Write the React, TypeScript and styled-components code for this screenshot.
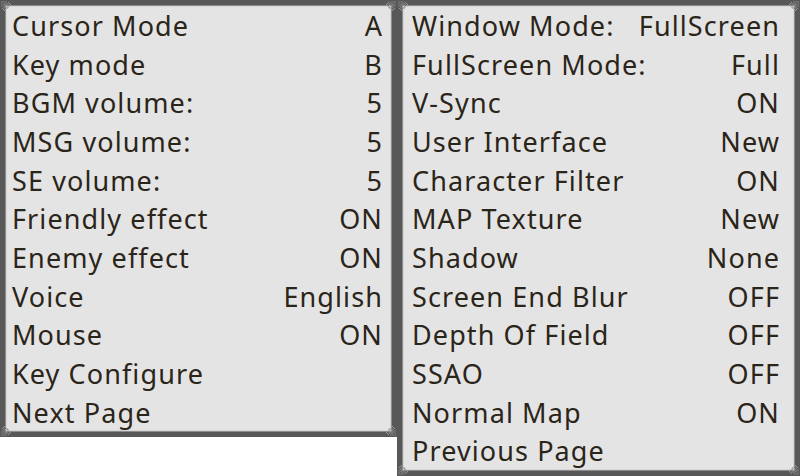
import React from 'react';
import styled, {createGlobalStyle} from 'styled-components';

type Item = {label: string; value?: string};

const leftItems: Item[] = [
  {label: 'Cursor Mode', value: 'A'},
  {label: 'Key mode', value: 'B'},
  {label: 'BGM volume:', value: '5'},
  {label: 'MSG volume:', value: '5'},
  {label: 'SE volume:', value: '5'},
  {label: 'Friendly effect', value: 'ON'},
  {label: 'Enemy effect', value: 'ON'},
  {label: 'Voice', value: 'English'},
  {label: 'Mouse', value: 'ON'},
  {label: 'Key Configure'},
  {label: 'Next Page'},
];

const rightItems: Item[] = [
  {label: 'Window Mode:', value: 'FullScreen'},
  {label: 'FullScreen Mode:', value: 'Full'},
  {label: 'V-Sync', value: 'ON'},
  {label: 'User Interface', value: 'New'},
  {label: 'Character Filter', value: 'ON'},
  {label: 'MAP Texture', value: 'New'},
  {label: 'Shadow', value: 'None'},
  {label: 'Screen End Blur', value: 'OFF'},
  {label: 'Depth Of Field', value: 'OFF'},
  {label: 'SSAO', value: 'OFF'},
  {label: 'Normal Map', value: 'ON'},
  {label: 'Previous Page'},
];

type Pos = 'tl' | 'tr' | 'bl' | 'br';

const Corner = ({pos}: {pos: Pos}) => (
  <Ornament pos={pos} width="14" height="14" viewBox="0 0 14 14">
    <path d="M1 1h6v2H3v4H1z" fill="#6a6a6a" />
    <path d="M4 4h4v4H4z" fill="none" stroke="#8a8a8a" strokeWidth="1" />
    <path d="M8 2l3 3M2 8l3 3" stroke="#9a9a9a" strokeWidth="1" />
  </Ornament>
);

type PanelProps = {items: Item[]; width: number; height: number; padLeft: number; padRight: number};

const Panel = ({items, ...frame}: PanelProps) => (
  <Frame {...frame}>
    <Corner pos="tl" />
    <Corner pos="tr" />
    <Corner pos="bl" />
    <Corner pos="br" />
    <List>
      {items.map(item => (
        <Row key={item.label}>
          <span>{item.label}</span>
          {item.value && <span>{item.value}</span>}
        </Row>
      ))}
    </List>
  </Frame>
);

export default function App() {
  return (
    <>
      <GlobalStyle />
      <Screen>
        <Panel items={leftItems} width={397} height={437} padLeft={7} padRight={9} />
        <Panel items={rightItems} width={403} height={476} padLeft={10} padRight={15} />
      </Screen>
    </>
  );
}

const GlobalStyle = createGlobalStyle`
  body {
    margin: 0;
    background: #ffffff;
    font-family: "Noto Sans", "DejaVu Sans", sans-serif;
  }
`;

const Screen = styled.div`
  display: flex;
  align-items: flex-start;
  width: 800px;
  height: 476px;
  overflow: hidden;
`;

const Frame = styled.div<{width: number; height: number; padLeft: number; padRight: number}>`
  position: relative;
  box-sizing: border-box;
  width: ${p => p.width}px;
  height: ${p => p.height}px;
  background: #e4e4e4;
  border: 5px solid #585858;
  box-shadow: inset 0 0 0 1px #8c8c8c, inset 0 0 0 2px #d6d6d6;
  padding: 1px ${p => p.padRight}px 0 ${p => p.padLeft}px;
`;

const Ornament = styled.svg<{pos: Pos}>`
  position: absolute;
  ${p => (p.pos[0] === 't' ? 'top: -5px;' : 'bottom: -5px;')}
  ${p => (p.pos[1] === 'l' ? 'left: -5px;' : 'right: -5px;')}
  transform: ${p =>
    ({tl: 'none', tr: 'scaleX(-1)', bl: 'scaleY(-1)', br: 'scale(-1, -1)'})[p.pos]};
`;

const List = styled.div`
  display: grid;
  grid-auto-rows: 38.7px;
`;

const Row = styled.div`
  display: flex;
  align-items: center;
  justify-content: space-between;
  color: #2b2519;
  font-size: 27px;
  letter-spacing: 1.1px;
  white-space: nowrap;
`;
